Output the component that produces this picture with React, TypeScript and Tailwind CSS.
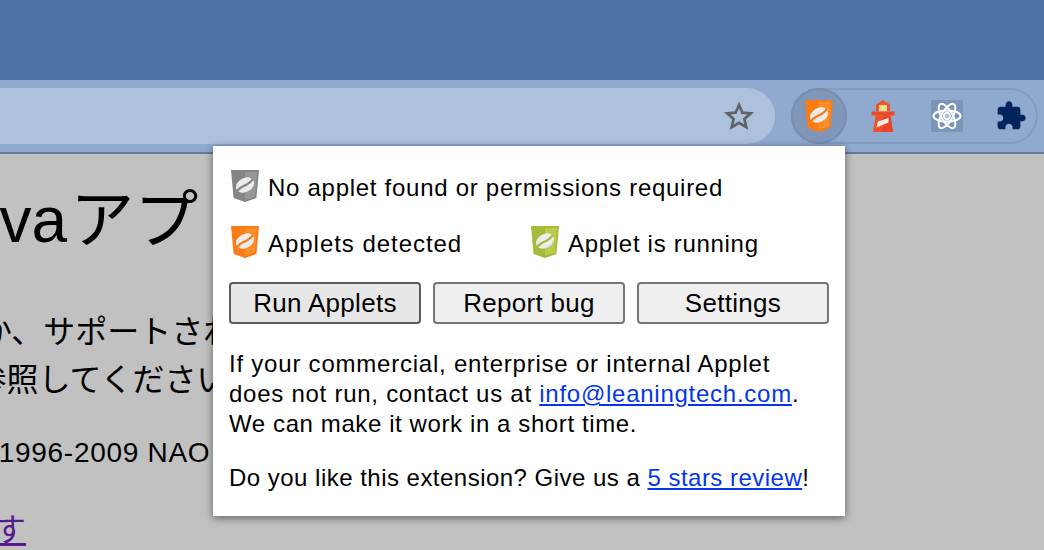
import React from "react";

const F = { fontFamily: '"Liberation Sans", "Noto Sans CJK JP", Arial, sans-serif' };

function Shield({ a, b }: { a: string; b: string }) {
  return (
    <svg width="32" height="32" viewBox="0 0 32 32" className="shrink-0">
      <path d="M2 0H30L27.4 28L16 32L4.6 28Z" fill={a} />
      <path d="M16 2H28L25.8 26.6L16 29.6Z" fill={b} />
      <g transform="rotate(-30 16 15)">
        <ellipse cx="16" cy="15" rx="9.6" ry="7" fill="#ececec" />
        <path d="M6 16.6C11 13 20 18 26 13.4" fill="none" stroke={a} strokeWidth="2.2" />
      </g>
    </svg>
  );
}

function Lighthouse() {
  return (
    <svg width="24" height="32" viewBox="0 0 24 32">
      <path d="M12 0L19 4.5V11H5V4.5Z" fill="#f2532b" />
      <rect x="8" y="5" width="8" height="6.5" fill="#f7dc8a" />
      <rect x="0.5" y="11.5" width="23" height="4" fill="#ee4a26" />
      <path d="M4.5 15.5H19.5L22 32H2Z" fill="#f2502a" />
      <path d="M12 15.5H19.5L22 32H12Z" fill="#e8452a" />
      <path d="M7 21.5L17.5 18V22.5L5.5 27.5Z" fill="#f3eee8" />
    </svg>
  );
}

function ReactTile() {
  return (
    <div className="w-8 h-8 rounded-[2px] bg-[#7b94ba] flex items-center justify-center">
      <svg width="30" height="28" viewBox="-15 -14 30 28" fill="none" stroke="#ffffff" strokeWidth="2">
        <ellipse rx="13.6" ry="5.6" />
        <ellipse rx="13.6" ry="5.6" transform="rotate(60)" />
        <ellipse rx="13.6" ry="5.6" transform="rotate(120)" />
        <circle r="3.2" fill="#b0c0d8" stroke="#ffffff" />
      </svg>
    </div>
  );
}

function Puzzle() {
  return (
    <svg width="32" height="32" viewBox="0 0 24 24" fill="#00245b">
      <path d="M20.5 11H19V7c0-1.1-.9-2-2-2h-4V3.5C13 2.12 11.88 1 10.5 1S8 2.12 8 3.5V5H4c-1.1 0-1.99.9-1.99 2v3.8H3.5c1.49 0 2.7 1.21 2.7 2.7s-1.21 2.7-2.7 2.7H2V20c0 1.1.9 2 2 2h3.8v-1.5c0-1.49 1.21-2.7 2.7-2.7s2.7 1.21 2.7 2.7V22H17c1.1 0 2-.9 2-2v-4h1.5c1.38 0 2.5-1.12 2.5-2.5S21.88 11 20.5 11z" />
    </svg>
  );
}

function Btn({ label, focused }: { label: string; focused?: boolean }) {
  return (
    <button
      style={F}
      className={
        "flex-1 h-[42px] rounded-[4px] border-2 text-[26px] tracking-[0.3px] text-black flex items-center justify-center " +
        (focused ? "border-[#5c5c5c] bg-[#e7e7e7]" : "border-[#767676] bg-[#efefef]")
      }
    >
      {label}
    </button>
  );
}

export default function App() {
  return (
    <div style={F} className="relative w-[1044px] h-[550px] overflow-hidden bg-[#c1c1c1] flex flex-col">
      <div className="h-20 shrink-0 bg-[#4e72a4]" />
      <div className="h-[74px] shrink-0 bg-[#8fa9cf] border-b-2 border-[#63799b] flex items-center pr-[6px]">
        <div className="flex-1 h-14 rounded-r-[28px] bg-[#adc1dc] flex items-center justify-end pr-[20px]">
          <svg width="32" height="32" viewBox="0 0 24 24" fill="none" stroke="#5f6368" strokeWidth="2" strokeLinejoin="miter">
            <path d="M12 3.6l2.5 5.9 6.4.5-4.9 4.2 1.5 6.2L12 17.1l-5.5 3.3 1.5-6.2-4.9-4.2 6.4-.5z" />
          </svg>
        </div>
        <div className="ml-4 w-[247px] h-14 rounded-[28px] border-2 border-[#839cc2] flex items-center">
          <div className="w-14 h-14 -ml-[2px] shrink-0 rounded-full bg-[#8097ba] border-2 border-[#768eb2] flex items-center justify-center">
            <Shield a="#fb7c14" b="#fd8f2b" />
          </div>
          <div className="ml-6"><Lighthouse /></div>
          <div className="ml-[36px]"><ReactTile /></div>
          <div className="ml-[32px]"><Puzzle /></div>
        </div>
      </div>

      <div className="flex-1 text-black whitespace-nowrap">
        <div className="text-[64px] leading-[72px] mt-[30px] -ml-[68px]">
          Java<span className="ml-[3px]">アプ</span><span className="ml-[8px]">リケーション</span>
        </div>
        <div className="text-[32px] leading-[48px] mt-[52px]">
          <div className="-ml-[180px]">を確認するか、サポートされている</div>
          <div className="-ml-[184px]">については参照してください</div>
        </div>
        <div className="text-[28px] tracking-[0.71px] leading-[32px] mt-[33px] -ml-[136px]">
          Copyright 1996-2009 NAO<span className="ml-[6px]">J</span>
        </div>
        <div className="text-[32px] leading-[48px] mt-[37px] -ml-[102px] text-[#551a8b] underline">戻ります</div>
      </div>

      <div className="absolute left-[213px] top-[146px] w-[632px] h-[370px] bg-white pt-6 pl-4 pr-4 shadow-[0_2px_8px_rgba(0,0,0,0.5)] text-[24px] text-black">
        <div className="flex items-center h-8 gap-[7px]">
          <Shield a="#858585" b="#979797" />
          <span className="tracking-[0.72px] pt-1">No applet found or permissions required</span>
        </div>
        <div className="flex items-center h-8 mt-6">
          <div className="w-[300px] flex items-center gap-[7px]">
            <Shield a="#fb7c14" b="#fd8f2b" />
            <span className="tracking-[0.96px] pt-1">Applets detected</span>
          </div>
          <div className="flex items-center gap-[7px]">
            <Shield a="#a9b83b" b="#bccb4b" />
            <span className="tracking-[0.7px] pt-1">Applet is running</span>
          </div>
        </div>
        <div className="flex gap-3 mt-6">
          <Btn label="Run Applets" focused />
          <Btn label="Report bug" />
          <Btn label="Settings" />
        </div>
        <p className="mt-[25px] leading-[30px]">
          <span className="tracking-[0.78px]">If your commercial, enterprise or internal Applet</span>
          <br />
          <span className="tracking-[0.74px]">
            does not run, contact us at <a className="text-[#0436ee] underline">info@leaningtech.com</a>.
          </span>
          <br />
          <span className="tracking-[0.6px]">We can make it work in a short time.</span>
        </p>
        <p className="mt-6 leading-[30px] tracking-[0.48px]">
          Do you like this extension? Give us a <a className="text-[#0436ee] underline">5 stars review</a>!
        </p>
      </div>
    </div>
  );
}
